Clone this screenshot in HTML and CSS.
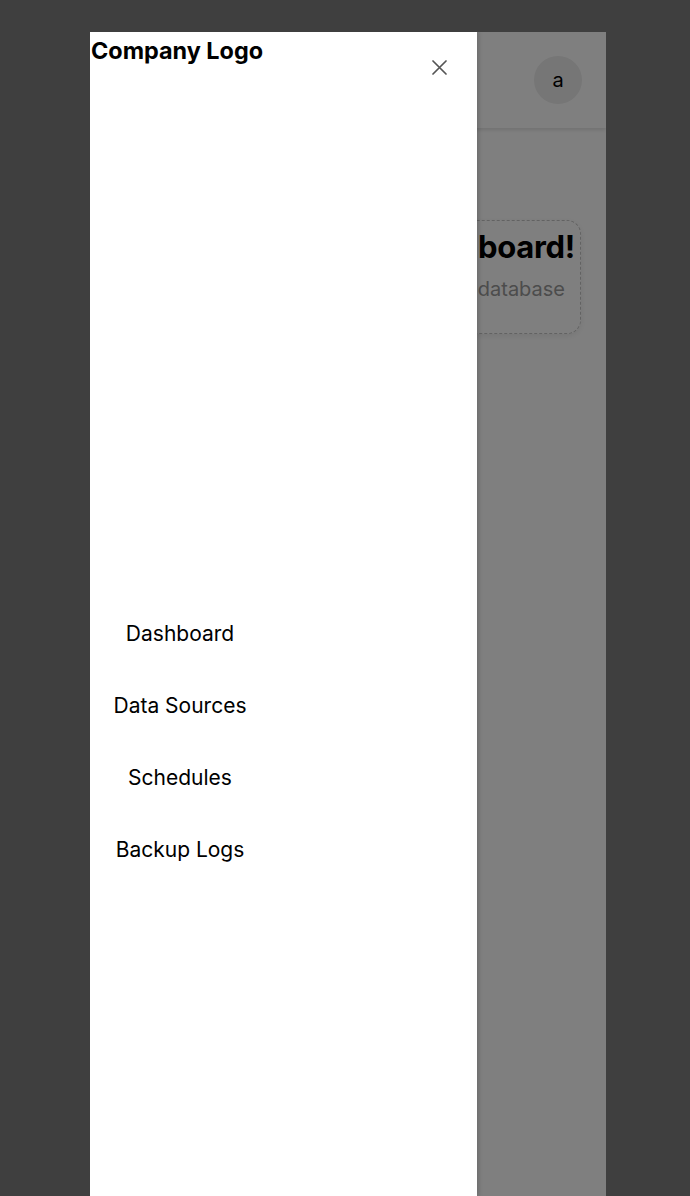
FILE: index.html
```html
<!DOCTYPE html>
<html lang="en">
<head>
<meta charset="utf-8">
<title>Dashboard</title>
<link rel="stylesheet" href="styles.css">
</head>
<body>
<div class="device">
  <div class="page">
    <header class="topbar">
      <div class="avatar">a</div>
    </header>
    <main class="main">
      <section class="welcome">
        <h1 class="welcome-title">Welcome to Dashboard!</h1>
        <p class="welcome-sub">Manage your database</p>
      </section>
    </main>
  </div>
  <div class="overlay"></div>
  <aside class="drawer">
    <div class="drawer-head">
      <div class="logo">Company Logo</div>
      <button class="close" aria-label="Close">
        <svg width="15" height="15" viewBox="0 0 15 15"><path d="M1 1L14 14M14 1L1 14" stroke="#555" stroke-width="1.7" stroke-linecap="round" fill="none"/></svg>
      </button>
    </div>
    <nav class="nav">
      <a class="nav-item">Dashboard</a>
      <a class="nav-item">Data Sources</a>
      <a class="nav-item">Schedules</a>
      <a class="nav-item">Backup Logs</a>
    </nav>
  </aside>
</div>
</body>
</html>
```

FILE: styles.css
```css
html, body {
  margin: 0;
  padding: 0;
  height: 100%;
}
body {
  background: #3f3f3f;
  font-family: Inter, "Noto Sans", sans-serif;
  overflow: hidden;
}
.device {
  position: relative;
  margin: 32px 0 0 90px;
  width: 516px;
  height: 1164px;
  background: #ffffff;
  overflow: hidden;
}
.page {
  display: flex;
  flex-direction: column;
  height: 100%;
}
.topbar {
  height: 96px;
  background: #fff;
  box-shadow: 0 2px 4px rgba(0,0,0,0.12);
  display: flex;
  align-items: center;
  justify-content: flex-end;
  padding: 0 24px;
  flex-shrink: 0;
}
.avatar {
  width: 48px;
  height: 48px;
  border-radius: 50%;
  background: #ececec;
  display: flex;
  align-items: center;
  justify-content: center;
  font-size: 20px;
  color: #000;
}
.main {
  padding: 92px 25px 0 24px;
  display: flex;
  justify-content: flex-end;
}
.welcome {
  border: 1px dashed #c4c4c4;
  border-radius: 14px;
  padding: 8px 5px 32px 20px;
  box-shadow: 0 2px 6px rgba(0,0,0,0.08);
  text-align: right;
}
.welcome-title {
  margin: 0;
  font-size: 31px;
  font-weight: 700;
  line-height: 36px;
  letter-spacing: -0.3px;
  color: #000;
  white-space: nowrap;
}
.welcome-sub {
  margin: 12px 10px 0 0;
  font-size: 20px;
  line-height: 24px;
  color: #999;
  white-space: nowrap;
}
.overlay {
  position: absolute;
  inset: 0;
  background: rgba(0,0,0,0.5);
}
.drawer {
  position: absolute;
  top: 0;
  left: 0;
  bottom: 0;
  width: 387px;
  background: #fff;
  box-shadow: 2px 0 4px rgba(0,0,0,0.15);
}
.drawer-head {
  display: flex;
  justify-content: space-between;
  align-items: flex-start;
  padding: 0 30px 0 1px;
}
.logo {
  font-size: 23.4px;
  font-weight: 700;
  line-height: 38px;
  color: #000;
}
.close {
  background: none;
  border: 0;
  padding: 0;
  margin-top: 28px;
  width: 15px;
  height: 15px;
  display: flex;
}
.nav {
  display: flex;
  flex-direction: column;
  align-items: center;
  width: 180px;
  margin-top: 546px;
  gap: 47px;
}
.nav-item {
  font-size: 21px;
  line-height: 25px;
  color: #000;
}
```
